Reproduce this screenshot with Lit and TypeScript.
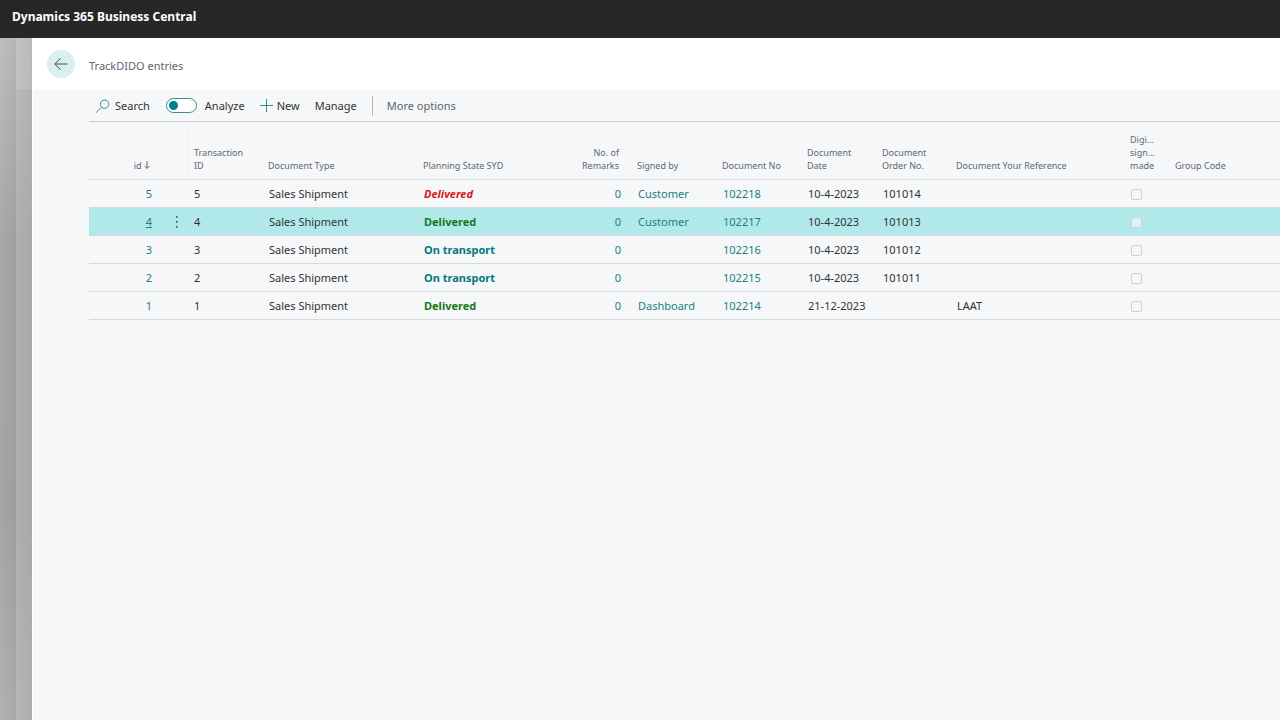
import { LitElement, html, css, nothing } from "lit";
import { customElement, property, state } from "lit/decorators.js";
import { classMap } from "lit/directives/class-map.js";

interface Entry {
  id: number;
  transaction: number;
  type: string;
  state: string;
  tone: "late" | "done" | "moving";
  remarks: number;
  signedBy: string;
  documentNo: string;
  date: string;
  orderNo: string;
  reference: string;
}

const ENTRIES: Entry[] = [
  { id: 5, transaction: 5, type: "Sales Shipment", state: "Delivered", tone: "late", remarks: 0, signedBy: "Customer", documentNo: "102218", date: "10-4-2023", orderNo: "101014", reference: "" },
  { id: 4, transaction: 4, type: "Sales Shipment", state: "Delivered", tone: "done", remarks: 0, signedBy: "Customer", documentNo: "102217", date: "10-4-2023", orderNo: "101013", reference: "" },
  { id: 3, transaction: 3, type: "Sales Shipment", state: "On transport", tone: "moving", remarks: 0, signedBy: "", documentNo: "102216", date: "10-4-2023", orderNo: "101012", reference: "" },
  { id: 2, transaction: 2, type: "Sales Shipment", state: "On transport", tone: "moving", remarks: 0, signedBy: "", documentNo: "102215", date: "10-4-2023", orderNo: "101011", reference: "" },
  { id: 1, transaction: 1, type: "Sales Shipment", state: "Delivered", tone: "done", remarks: 0, signedBy: "Dashboard", documentNo: "102214", date: "21-12-2023", orderNo: "", reference: "LAAT" },
];

@customElement("entries-toolbar")
export class EntriesToolbar extends LitElement {
  static styles = css`
    :host {
      display: block;
      color: #333;
      font-size: 11px;
      line-height: 16px;
    }
    .bar {
      display: flex;
      align-items: center;
      height: 31px;
      padding-left: 6px;
      border-bottom: 1px solid #c8cccf;
    }
    .action {
      display: flex;
      align-items: center;
      gap: 4px;
      margin: 0 15px 0 0;
      padding: 0;
      border: 0;
      background: none;
      color: inherit;
      font: inherit;
      cursor: pointer;
    }
    .action span {
      padding-top: 1px;
    }
    .action svg {
      flex: none;
      fill: none;
      stroke: #2f8f8c;
    }
    .search {
      margin-right: 16px;
    }
    .toggle {
      gap: 8px;
    }
    .switch {
      appearance: none;
      display: flex;
      align-items: center;
      box-sizing: border-box;
      width: 31px;
      height: 15px;
      margin: 0;
      padding: 0 2px;
      border: 1px solid #2f8f8c;
      border-radius: 8px;
      background: #fff;
    }
    .switch::before {
      content: "";
      width: 9px;
      height: 9px;
      border-radius: 50%;
      background: #00808a;
    }
    .switch:checked {
      justify-content: flex-end;
    }
    .rule {
      width: 1px;
      height: 20px;
      margin-right: 14px;
      background: #b4b9bd;
    }
    .more {
      color: #5c6670;
    }
  `;

  render() {
    return html`
      <div class="bar" role="toolbar" aria-label="Actions">
        <button class="action search">
          <svg width="16" height="16" viewBox="0 0 16 16" aria-hidden="true">
            <circle cx="9.6" cy="6.2" r="4.2" />
            <path d="M6.6 9.2.8 14.8" />
          </svg>
          <span>Search</span>
        </button>
        <label class="action toggle">
          <input class="switch" type="checkbox" role="switch" /><span>Analyze</span>
        </label>
        <button class="action">
          <svg width="13" height="13" viewBox="0 0 13 13" aria-hidden="true">
            <path d="M6.5 0v13M0 6.5h13" />
          </svg>
          <span>New</span>
        </button>
        <button class="action"><span>Manage</span></button>
        <div class="rule"></div>
        <button class="action more"><span>More options</span></button>
      </div>
    `;
  }
}

@customElement("entries-table")
export class EntriesTable extends LitElement {
  @property({ attribute: false }) entries: Entry[] = [];
  @state() private selected = 4;

  static styles = css`
    :host {
      display: block;
      font-size: 11px;
      line-height: 16px;
    }
    table {
      width: 100%;
      table-layout: fixed;
      border-collapse: separate;
      border-spacing: 0;
    }
    .w-id { width: 71px; }
    .w-menu { width: 29px; }
    .w-transaction { width: 71px; }
    .w-date { width: 75px; }
    .w-order { width: 74px; }
    .w-type { width: 155px; }
    .w-state { width: 154px; }
    .w-remarks { width: 60px; }
    .w-mid { width: 85px; }
    .w-ref { width: 174px; }
    .w-check { width: 45px; }
    th {
      box-sizing: border-box;
      height: 58px;
      padding: 0 8px 7px;
      border-bottom: 1px solid #d5d9db;
      color: #5f6872;
      font-size: 9px;
      font-weight: 400;
      line-height: 13px;
      text-align: left;
      vertical-align: bottom;
    }
    td {
      box-sizing: border-box;
      height: 28px;
      padding: 1px 8px 0 9px;
      border-bottom: 1px solid #d5d9db;
      color: #333;
      white-space: nowrap;
    }
    .num {
      text-align: right;
    }
    th.num {
      padding-right: 10px;
    }
    .frozen {
      padding: 0 8px;
      text-align: right;
    }
    th.frozen {
      border-right: 1px solid #f0f1f3;
    }
    .transaction {
      padding-left: 5px;
    }
    .line {
      display: block;
      white-space: nowrap;
    }
    .sort {
      fill: none;
      stroke: #5f6872;
    }
    .link {
      color: #217f7c;
      text-decoration: none;
    }
    .selected td {
      background: #b1e9eb;
    }
    .selected .id {
      text-decoration: underline;
    }
    .state {
      font-weight: 700;
    }
    .late {
      color: #d6161c;
      font-style: italic;
    }
    .done {
      color: #17781b;
    }
    .moving {
      color: #067680;
    }
    .row-menu {
      display: block;
      margin-left: auto;
      padding: 0;
      border: 0;
      background: none;
    }
    .row-menu svg {
      display: block;
      fill: #4a5a5c;
    }
    .check {
      appearance: none;
      display: block;
      box-sizing: border-box;
      width: 11px;
      height: 11px;
      margin: 0;
      border: 1px solid #cfd2d4;
      border-radius: 2px;
      background: #f5f7f8;
    }
    .selected .check {
      background: #dff1f3;
    }
  `;

  private row(e: Entry) {
    const active = e.id === this.selected;
    return html`
      <tr class=${classMap({ selected: active })} @click=${() => (this.selected = e.id)}>
        <td class="num"><a class="link id" href="#entry-${e.id}">${e.id}</a></td>
        <td class="frozen">
          ${active
            ? html`<button class="row-menu" aria-label="Show more options">
                <svg width="8" height="14" viewBox="0 0 8 14" aria-hidden="true">
                  <path d="M3 1h1.6v1.8H3zM3 6h1.6v1.8H3zM3 11h1.6v1.8H3z" />
                </svg>
              </button>`
            : nothing}
        </td>
        <td class="transaction">${e.transaction}</td>
        <td>${e.type}</td>
        <td class="state ${e.tone}">${e.state}</td>
        <td class="num"><a class="link" href="#remarks-${e.id}">${e.remarks}</a></td>
        <td>${e.signedBy ? html`<a class="link" href="#signer-${e.id}">${e.signedBy}</a>` : nothing}</td>
        <td><a class="link" href="#document-${e.documentNo}">${e.documentNo}</a></td>
        <td>${e.date}</td>
        <td>${e.orderNo}</td>
        <td>${e.reference}</td>
        <td><input class="check" type="checkbox" disabled aria-label="Digital signature made" /></td>
        <td></td>
      </tr>
    `;
  }

  render() {
    return html`
      <table>
        <colgroup>
          <col class="w-id" /><col class="w-menu" /><col class="w-transaction" />
          <col class="w-type" /><col class="w-state" /><col class="w-remarks" />
          <col class="w-mid" /><col class="w-mid" /><col class="w-date" />
          <col class="w-order" /><col class="w-ref" /><col class="w-check" /><col />
        </colgroup>
        <thead>
          <tr>
            <th class="num">
              id
              <svg class="sort" width="6" height="8" viewBox="0 0 6 8" aria-hidden="true">
                <path d="M3 0v7.3M.6 5 3 7.4 5.4 5" />
              </svg>
            </th>
            <th class="frozen"></th>
            <th class="transaction">Transaction ID</th>
            <th>Document Type</th>
            <th>Planning State SYD</th>
            <th class="num">No. of Remarks</th>
            <th>Signed by</th>
            <th>Document No</th>
            <th>Document Date</th>
            <th>Document Order No.</th>
            <th>Document Your Reference</th>
            <th>
              <span class="line">Digi...</span><span class="line">sign...</span><span class="line">made</span>
            </th>
            <th>Group Code</th>
          </tr>
        </thead>
        <tbody>
          ${this.entries.map((e) => this.row(e))}
        </tbody>
      </table>
    `;
  }
}

@customElement("app-root")
export class AppRoot extends LitElement {
  static styles = css`
    :host {
      display: flex;
      flex-direction: column;
      min-height: 100vh;
      background: #f5f7f9;
      font-family: "Noto Sans", "Open Sans", sans-serif;
    }
    .product {
      display: flex;
      align-items: center;
      height: 38px;
      padding: 0 12px 4px;
      box-sizing: border-box;
      background: #272727;
      color: #fff;
      font-size: 12px;
      font-weight: 700;
      line-height: 16px;
    }
    .stage {
      display: flex;
      flex: 1;
    }
    .layer {
      width: 16px;
      background:
        linear-gradient(90deg, transparent, rgb(0 0 0 / 5%)),
        linear-gradient(#bebebe, #a8a8a8 30%, #a6a6a6 70%, #b2b2b2);
    }
    .layer.near {
      background:
        radial-gradient(circle at 28px 26px, #a5b9b7 13px, transparent 14px),
        linear-gradient(90deg, transparent, rgb(0 0 0 / 4%)),
        linear-gradient(#c2c2c2 51px, #b9b9bc 52px, #afafb2 30%, #afafb2 70%, #b6b6b9);
    }
    .page {
      box-sizing: border-box;
      flex: 1;
      min-width: 0;
      border-left: 1px solid #fff;
    }
    .heading {
      display: flex;
      align-items: center;
      gap: 14px;
      height: 52px;
      padding-left: 14px;
      background: #fff;
    }
    .back {
      display: grid;
      place-items: center;
      width: 28px;
      height: 28px;
      padding: 0;
      border: 0;
      border-radius: 50%;
      background: #d9f0f0;
    }
    .back svg {
      fill: none;
      stroke: #3a4a50;
    }
    h1 {
      margin: 0;
      padding-top: 4px;
      color: #5c6670;
      font-size: 11px;
      font-weight: 400;
      line-height: 16px;
    }
    .content {
      padding-left: 56px;
    }
  `;

  render() {
    return html`
      <header class="product">Dynamics 365 Business Central</header>
      <div class="stage">
        <div class="layer"></div>
        <div class="layer near"></div>
        <main class="page">
          <div class="heading">
            <button class="back" aria-label="Back">
              <svg width="14" height="14" viewBox="0 0 14 14" aria-hidden="true">
                <path d="M13.5 7H1M6.5 1.2.8 7l5.7 5.8" />
              </svg>
            </button>
            <h1>TrackDIDO entries</h1>
          </div>
          <div class="content">
            <entries-toolbar></entries-toolbar>
            <entries-table .entries=${ENTRIES}></entries-table>
          </div>
        </main>
      </div>
    `;
  }
}
